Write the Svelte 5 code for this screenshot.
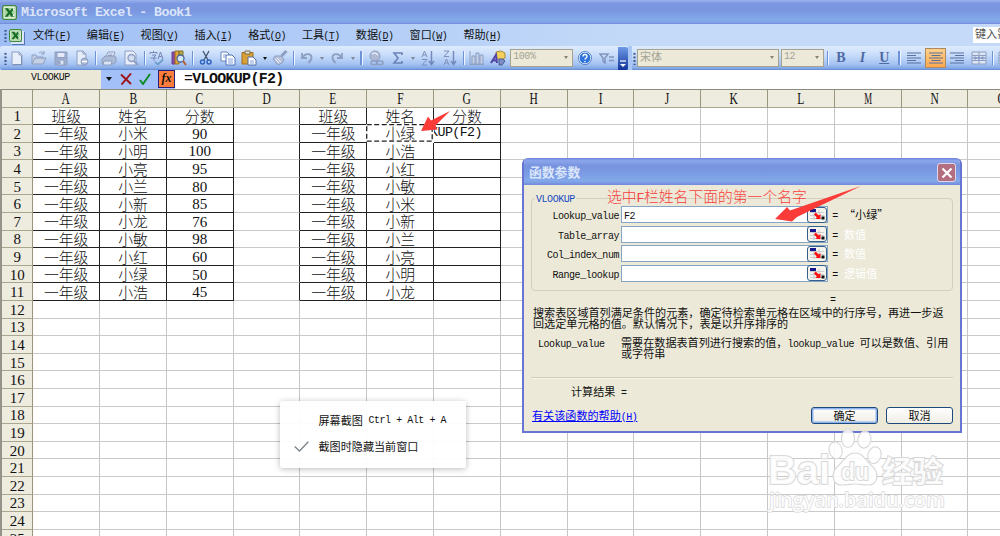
<script>
  const menus = [
    ['文件', 'F'], ['编辑', 'E'], ['视图', 'V'], ['插入', 'I'], ['格式', 'O'],
    ['工具', 'T'], ['数据', 'D'], ['窗口', 'W'], ['帮助', 'H'],
  ];
  const columns = 'ABCDEFGHIJKLMNO'.split('');
  const left = [
    ['小米', '90'], ['小明', '100'], ['小亮', '95'], ['小兰', '80'], ['小新', '85'],
    ['小龙', '76'], ['小敏', '98'], ['小红', '60'], ['小绿', '50'], ['小浩', '45'],
  ];
  const right = ['小绿', '小浩', '小红', '小敏', '小米', '小新', '小兰', '小亮', '小明', '小龙'];
  const rows = Array.from({ length: 25 }, (_, r) => {
    if (r === 0) return ['班级', '姓名', '分数', '', '班级', '姓名', '分数'];
    if (r > 10) return [];
    const [name, score] = left[r - 1];
    return ['一年级', name, score, '', '一年级', right[r - 1], r === 1 ? 'KUP(F2)' : ''];
  });
  const boxed = (r, c) => r < 11 && c < 7 && c !== 3;
  const runs = (s) => s.match(/[\x20-\x7e]+|[^\x20-\x7e]+/g) ?? [];
  const standard = [
    'new', 'open', 'save', 'perm', '|', 'print', 'preview', '|', 'spell', 'research', '|',
    'cut', 'copy', 'paste', 'v', 'brush', '|', 'undo', 'v', 'redo', 'v', '||', 'link', 'sum', 'v',
    'az', 'za', '|', 'chart', 'draw',
  ];
  const args = [
    ['Lookup_value', 'F2', '“小绿”', true],
    ['Table_array', '', '数值', false],
    ['Col_index_num', '', '数值', false],
    ['Range_lookup', '', '逻辑值', false],
  ];
</script>

{#snippet t(s)}{#each runs(s) as run}{#if run.charCodeAt(0) < 127}<span class="half">{run}</span>{:else}{run}{/if}{/each}{/snippet}

{#snippet book(size)}
  <svg width={size} height={size} viewBox="0 0 16 16">
    <rect x=".7" y=".7" width="14.6" height="14.6" rx="2" fill="#eaf6e4" stroke="#3f8a3c" stroke-width="1.4" />
    <rect x="2.5" y="3" width="11" height="10" fill="#a5d39b" />
    <path d="M3 3.500h3.500l2 2.800 2-2.800h2.700L10 8l3.200 4.500H10L8 9.700 6 12.500H3L6.500 8z" fill="#176b27" />
    <path d="M11 3.500h2v3zM11 12h2V9z" fill="#fff" />
  </svg>
{/snippet}

{#snippet glyph(k)}
  <svg width="16" height="16" viewBox="0 0 16 16" fill="none" stroke="#8d9ec2" stroke-width="1">
    {#if k === 'new'}
      <path d="M3 2h7l3 3v10H3z" fill="#e9effa" /><path d="M10 2v3h3" /><path d="M12.500 6v8.500H4" stroke="#7f91b8" />
    {:else if k === 'open'}
      <path d="M1 14V5h4l1 2h6v2M1 14l3-6h11l-3 6z" fill="#c6d0e5" /><path d="M8 3c2-2 4-1 5 1m0-3v3h-3" />
    {:else if k === 'save'}
      <path d="M2 2h12v13H2z" fill="#9fafd0" /><path d="M4 2.500h8v5H4z" fill="#e4ebf7" /><path d="M5 10h6v5H5z" fill="#dbe3f3" /><path d="M6.500 11v3" stroke-width="2" />
    {:else if k === 'perm'}
      <path d="M3 1h6l3 3v11H3z" fill="#e6ecf8" /><path d="M9 1v3h3" /><circle cx="10.500" cy="11.500" r="3.500" fill="#a9b7d4" /><path d="M8 11.500h5" stroke="#fff" stroke-width="1.500" />
    {:else if k === 'print'}
      <path d="M5 7l2-5h7l-2 5" fill="#edf2fb" /><path d="M1 9l3-3h10l1 2v4l-3 2H1z" fill="#aebbd6" /><path d="M3 11h8l-1 4H2z" fill="#dce4f3" /><path d="M7.500 4h4M7 5.500h4" />
    {:else if k === 'preview'}
      <path d="M2 1h8l3 3v11H2z" fill="#e9effa" /><circle cx="8.500" cy="8" r="3.500" fill="#d3def0" stroke-width="1.400" /><path d="M11 11l4 4" stroke-width="2" />
    {:else if k === 'spell'}
      <path d="M1 4V2.500h7V4M4.500 1v1.500M3 5h4L5 7v4M1.500 8h6M9 9l2.500-7L14 9M10 6.500h3" stroke="#7888ba" /><path d="M6 12l3 2.500 5-5" stroke="#6e9fca" stroke-width="1.800" />
    {:else if k === 'research'}
      <path d="M1 2h3v12H1z" fill="#8c4aa4" stroke="#6b3f94" /><path d="M4 1h4v13H4z" fill="#e0a83c" stroke="#9a6a24" /><path d="M8 1h4v9H8z" fill="#b9a646" stroke="#80722b" /><circle cx="9.500" cy="8.500" r="3.500" fill="#d4e6fa" stroke="#4b6695" stroke-width="1.300" /><path d="M12 11l3 4" stroke="#b55f31" stroke-width="2" />
    {:else if k === 'cut'}
      <path d="M5 1l5 9M11 1L6 10" stroke="#41546f" stroke-width="1.300" /><circle cx="4.500" cy="12" r="2" stroke="#2f66bf" stroke-width="1.500" /><circle cx="11" cy="12" r="2" stroke="#2f66bf" stroke-width="1.500" />
    {:else if k === 'copy'}
      <path d="M1 2h6l2 2v7H1z" fill="#fff" stroke="#6684bd" /><path d="M6 5h6l3 3v7H6z" fill="#fff" stroke="#4f72b6" /><path d="M8 9h5M8 11h5M8 13h5M3 5h3M3 7h3" stroke="#7fa2dc" />
    {:else if k === 'paste'}
      <path d="M1 2.500h11V14H1z" fill="#d9a036" stroke="#a06f20" /><path d="M4 1h5v3H4z" fill="#e9e4d0" stroke="#7b6c4c" /><path d="M7 7h5l3 3v5H7z" fill="#fff" stroke="#506fa8" /><path d="M9 11h4M9 13h4" stroke="#7fa2dc" />
    {:else if k === 'brush'}
      <path d="M14.500 1l-5 5" stroke-width="3" /><path d="M3 6l6 0 3 3-2 4-4 2-5-6z" fill="#b5c1da" /><path d="M3 9l4 4M5 8l4 4" stroke="#edf2fa" />
    {:else if k === 'undo'}
      <path d="M3 3v5h5M3.500 7.500C6 3 12 3 12.500 7c.2 2-1 4-3 6" stroke-width="1.800" />
    {:else if k === 'redo'}
      <path d="M13 3v5H8M12.500 7.500C10 3 4 3 3.500 7c-.2 2 1 4 3 6" stroke-width="1.800" />
    {:else if k === 'link'}
      <circle cx="7" cy="6" r="5" fill="#aebad5" /><path d="M4 4c2-2 4-1 6 1" stroke="#e2e9f5" stroke-width="1.500" /><rect x="3" y="11" width="6.500" height="3.500" rx="1.700" stroke-width="1.600" /><rect x="8.500" y="11" width="6.500" height="3.500" rx="1.700" stroke-width="1.600" />
    {:else if k === 'sum'}
      <path d="M12 5V3H4l4 5-4 5h8v-2" stroke="#6b83b7" stroke-width="1.600" />
    {:else if k === 'az' || k === 'za'}
      <path d={k === 'az' ? 'M2 7l2.500-6L7 7M3 5h3M2 9.500h5l-5 5.500h5' : 'M2 1h5L2 6.500h5M2 15l2.500-6L7 15M3 13h3'} stroke="#7f91b9" /><path d="M11.500 1v13M9 11l2.500 3.500L14 11" stroke="#7288bb" stroke-width="1.400" />
    {:else if k === 'chart'}
      <path d="M1 1v13.500h14" /><path d="M3 6h3v8H3zM7 3h3v11H7zM11 5h3v9h-3z" fill="#c7d1e6" />
    {:else if k === 'draw'}
      <path d="M6 2l5-1 4 2v5l-4 2-5-2z" fill="#f2cf5c" stroke="#a98b38" /><path d="M1 13L6 5l1 8M3 10.500h4" stroke="#5246a8" stroke-width="2" /><path d="M9 9h4l2 2-3 4H9z" fill="#7c8fc4" stroke="#4b5a94" />
    {:else if k === 'merge'}
      <path d="M1 2h14v12H1zM1 5.500h14M1 10.500h14M8 2v3.500M8 10.500V14" fill="#dde5f3" /><path d="M1.500 8h4M14.500 8h-4M4 6.500L5.500 8 4 9.500M12 6.500L10.500 8l1.500 1.500" stroke="#5e78af" /><circle cx="8" cy="8" r="1.200" stroke="#5e78af" />
    {/if}
  </svg>
{/snippet}

{#snippet align(x1, x2)}
  <svg width="14" height="12" viewBox="0 0 14 12" stroke="#59719f" stroke-width="1.200">
    <path d={`M0 1h14M${x1} 3.500h${x2}M0 6h14M${x1} 8.500h${x2}M0 11h14`} />
  </svg>
{/snippet}

<div class="screen">
  <header class="title">{@render book(15)}<b>{@render t('Microsoft Excel - Book1')}</b></header>

  <nav class="menu">
    <i class="grip"></i>
    <span class="doc">{@render book(13)}</span>
    {#each menus as [name, key]}
      <span class="item">{name}<span class="half"> (<u>{key}</u>)</span></span>
    {/each}
    <span class="ask">键入需</span>
  </nav>

  <div class="tools">
    <div class="bar first">
      <i class="grip"></i>
      {#each standard as k, i}
        {#if k === '|' || k === '||'}<span class="sep" class:wide={k === '||'}></span>
        {:else if k === 'v'}<span class="drop" class:on={i === 14}></span>
        {:else}<span class="slot">{@render glyph(k)}</span>{/if}
      {/each}
      <span class="combo zoom">{@render t('100%')}<i></i></span>
      <span class="slot">
        <svg width="14" height="14" viewBox="0 0 14 14"><circle cx="7" cy="7" r="5.900" fill="#2f73dc" stroke="#e9f2ff" /><circle cx="7" cy="7" r="6.600" fill="none" stroke="#3767b8" stroke-width=".7" /><path d="M5 5.500c0-3 4.200-2.500 4 0C9 7 7 7 7 8.500M7 10v1.300" fill="none" stroke="#fff" stroke-width="1.400" /></svg>
      </span>
      <span class="slot">
        <svg width="15" height="12" viewBox="0 0 15 12" fill="none" stroke="#8395bb" stroke-width="1.500"><path d="M1 2h8L6 6v5L4 9V6zM10 5h5M10 8.500h5" /></svg>
      </span>
      <span class="end"><svg width="8" height="8" viewBox="0 0 8 8"><path d="M1 1h6" stroke="#fff" stroke-width="1.200" /><path d="M1 4h6L4 7z" fill="#fff" /></svg></span>
    </div>
    <div class="bar second">
      <i class="grip"></i>
      <span class="combo font">宋体<i></i></span>
      <span class="combo size">{@render t('12')}<i></i></span>
      <span class="sep"></span>
      <span class="slot letter"><b>B</b></span>
      <span class="slot letter"><em>I</em></span>
      <span class="slot letter"><u>U</u></span>
      <span class="sep wide"></span>
      <span class="slot">{@render align(0, 9)}</span>
      <span class="slot active">{@render align(2.5, 9)}</span>
      <span class="slot">{@render align(5, 9)}</span>
      <span class="slot">{@render glyph('merge')}</span>
      <span class="sep"></span>
      <span class="slot">{@render glyph('merge')}</span>
    </div>
  </div>

  <div class="formula">
    <span class="name">{@render t('VLOOKUP')}</span>
    <span class="acts">
      <span class="drop on"></span>
      <svg width="12" height="12" viewBox="0 0 12 12"><path d="M1 1.500l10 9.500M11 .5L1.500 11.500" stroke="#a01018" stroke-width="1.900" /></svg>
      <svg width="12" height="12" viewBox="0 0 12 12"><path d="M1 7l3 4L11 1" fill="none" stroke="#0c8a20" stroke-width="1.900" /></svg>
      <span class="fx">fx</span>
    </span>
    <span class="input">{@render t('=')}<b>{@render t('VLOOKUP(F2)')}</b></span>
  </div>

  <main class="sheet">
    <div class="row heads">
      <span class="corner"></span>
      {#each columns as c}<span class="cell"><span class="squeeze" class:w={c === 'M'}>{c}</span></span>{/each}
    </div>
    {#each rows as row, r}
      <div class="row">
        <span class="num">{r + 1}</span>
        {#each columns as _, c}
          <span class="cell" class:boxed={boxed(r, c)} class:edge={boxed(r, c + 1) && !boxed(r, c)} class:digits={c === 2 && r > 0} class:editing={r === 1 && c === 6} class:noright={r === 1 && c === 5}>
            {@render t(row[c] ?? '')}
            {#if r === 1 && c === 5}<svg class="ants" width="67" height="18" viewBox="0 0 67 18"><rect x=".7" y=".7" width="65.500" height="16.500" fill="none" stroke="#fff" stroke-width="1.500" /><rect x=".7" y=".7" width="65.500" height="16.500" fill="none" stroke="#222" stroke-width="1.300" stroke-dasharray="5 2.500" /></svg>{/if}
          </span>
        {/each}
      </div>
    {/each}
  </main>

  <svg class="arrow cellarrow" width="30" height="22" viewBox="0 0 30 22"><path d="M0 20L7 5.500l3 4L29 0 14.500 14.500l2 4z" fill="#fb3b38" /></svg>

  <div class="dialog">
    <div class="dtitle"><b>函数参数</b>
      <span class="close"><svg width="12" height="12" viewBox="0 0 12 12"><path d="M1.500 1.500l9 9M10.500 1.500l-9 9" stroke="#fff" stroke-width="2.200" /></svg></span>
    </div>
    <div class="body">
      <fieldset>
        <legend>{@render t('VLOOKUP')}</legend>
        {#each args as [label, value, result, known]}
          <div class="arg">
            <span class="label">{@render t(label)}</span>
            <span class="field"><span>{@render t(value)}</span>
              <span class="pick"><svg width="15" height="11" viewBox="0 0 15 11"><path d="M0 3.500h14M0 6.500h14M0 9.500h14M4 1v10M9 1v10" stroke="#b9bfc6" stroke-width=".7" /><rect x="0" y="0" width="6" height="3" fill="#16168c" /><path d="M10.500 10H5.500l1.300-1.500L4 5.500 5.800 3.500l2.900 3 1.800-1.500z" fill="#f11" /><rect x="11.500" y="7.500" width="3" height="3" fill="#111" /></svg></span>
            </span>
            <span class="eq">{@render t('=')}</span>
            <span class="result" class:known>{result}</span>
          </div>
        {/each}
      </fieldset>
      <div class="total">{@render t('=')}</div>
      <p>搜索表区域首列满足条件的元素，确定待检索单元格在区域中的行序号，再进一步返<br />回选定单元格的值。默认情况下，表是以升序排序的</p>
      <div class="help">
        <span class="hl">{@render t('Lookup_value')}</span>
        <span>{@render t('需要在数据表首列进行搜索的值，lookup_value 可以是数值、引用')}<br />或字符串</span>
      </div>
      <div class="calc">{@render t('计算结果 =')}</div>
      <div class="foot">
        <a href="#help">{@render t('有关该函数的帮助(H)')}</a>
        <span class="btn ok">确定</span>
        <span class="btn">取消</span>
      </div>
    </div>
  </div>

  <div class="note">{@render t('选中F栏姓名下面的第一个名字')}</div>
  <svg class="arrow bigarrow" width="88" height="36" viewBox="0 0 88 36"><path d="M0 33L12 21l3 3.500L86 0 22 31l-5 4.500z" fill="#fb3b38" /></svg>

  <div class="popup">
    <div><span></span>{@render t('屏幕截图 Ctrl + Alt + A')}</div>
    <div><span><svg width="15" height="11" viewBox="0 0 15 11"><path d="M.7 5.500l4.800 4.500L14.300.7" fill="none" stroke="#7b838a" stroke-width="1.300" /></svg></span>截图时隐藏当前窗口</div>
  </div>

  <svg class="mark" width="184" height="88" viewBox="0 0 184 88">
    <g fill="#fff" fill-opacity=".85" stroke="#d9d9d9" stroke-width="1.200">
      <ellipse cx="70.500" cy="22.500" rx="6.500" ry="8.500" transform="rotate(-15 70 22)" />
      <ellipse cx="83" cy="10.500" rx="6.500" ry="9" />
      <ellipse cx="99.500" cy="11.500" rx="6.500" ry="8.500" transform="rotate(12 99 11)" />
      <ellipse cx="109.500" cy="27" rx="6.500" ry="8.500" transform="rotate(18 109 27)" />
      <path d="M90 25c8 0 11 8 17 13 8 7 6 19-4 19-5 0-9-1-13-1s-8 1-13 1c-10 0-12-12-4-19 6-5 9-13 17-13z" />
      <g paint-order="stroke" stroke-width="2" font-family="Liberation Sans, sans-serif" font-weight="700">
        <text x="3" y="56" font-size="40" textLength="62" lengthAdjust="spacingAndGlyphs">Bai</text>
        <text x="76" y="52" font-size="24" textLength="28" lengthAdjust="spacingAndGlyphs">du</text>
        <text x="117" y="54" font-size="30" textLength="61" lengthAdjust="spacingAndGlyphs" font-family="Noto Sans CJK SC, sans-serif">经验</text>
        <text x="4" y="79" font-size="20" textLength="176" lengthAdjust="spacingAndGlyphs" font-weight="600" font-family="Open Sans, sans-serif" stroke-width="1.300">jingyan.baidu.com</text>
      </g>
    </g>
  </svg>
</div>

<style>
  :global(body) { overflow: hidden; }
  .screen {
    position: relative; width: 1000px; height: 536px; overflow: hidden; background: #fff;
    display: flex; flex-direction: column; color: #111; white-space: nowrap;
    font: 11.1px/1 "Noto Sans CJK SC", sans-serif;
  }
  .screen :global(*) { box-sizing: border-box; }
  svg { display: block; flex: none; }
  .half { font-family: "Liberation Mono", monospace; font-size: .9em; letter-spacing: -.0446em; white-space: pre; line-height: 0; }
  .title {
    flex: none; height: 24px; display: flex; align-items: center; gap: 4px; padding-left: 2px;
    background: linear-gradient(#9ab3ee, #7b97e0 15%, #7a96df 45%, #83a8ea 80%, #82a5e8 92%, #7288dc);
    color: #dbe5fb; font-size: 14.8px;
  }
  .title b { font-size: 14.800px; padding-bottom: 3px; }
  .menu {
    flex: none; height: 22px; display: flex; align-items: center; padding-left: 4px;
    background: linear-gradient(90deg, #9ebef5, #c4daf8 65%);
  }
  .grip { width: 3px; height: 13px; flex: none; background: radial-gradient(circle, #3a5287 1px, transparent 1.200px) 0 0 / 3px 3.600px; }
  .doc { width: 26px; padding-left: 2px; display: block; }
  .doc svg { box-shadow: 2px 2px 0 #dbe6fa, 3px 3px 0 #5575b5; }
  .item { width: 53.8px; flex: none; line-height: 14px; padding-bottom: 3px; }
  .item .half { letter-spacing: -.05em; margin-left: -1px; }
  .item u { text-underline-offset: 1px; }
  .ask { margin-left: auto; width: 27px; height: 16px; line-height: 13px; background: #fff; padding-left: 2px; overflow: hidden; color: #555; }
  .tools { flex: none; height: 24px; display: flex; gap: 4px; background: #a9c6f5; }
  .bar {
    display: flex; align-items: center; height: 24px; flex: none;
    background: linear-gradient(#dfebfd, #cadefa 35%, #a5c3f2 75%, #83a8e6 93%, #5f86cc);
  }
  .first { width: 628px; padding-left: 3.5px; border-radius: 3px 0 0 3px; }
  .second { width: 368px; padding-left: 1px; overflow: hidden; }
  .slot { width: 21.7px; height: 20px; flex: none; display: flex; align-items: center; justify-content: center; }
  .sep { width: 5px; height: 14px; flex: none; background: linear-gradient(90deg, transparent 40%, #6c93d6 40%, #6c93d6 60%, #eef5ff 60%, #eef5ff 80%, transparent 80%); }
  .sep.wide { width: 8px; }
  .drop { width: 9px; flex: none; display: flex; justify-content: center; }
  .drop::after { content: ""; border: 2.500px solid transparent; border-top: 3px solid #7c8694; border-bottom: 0; }
  .drop.on::after { border-top-color: #111; }
  .combo {
    height: 18px; flex: none; border: 1px solid #a5a28f; background: #ece9d8; color: #a4a294;
    display: flex; justify-content: space-between; align-items: center; padding: 0 4px 2px 2px; margin-right: 1px;
  }
  .combo i { border: 2.500px solid transparent; border-top: 3px solid #868374; border-bottom: 0; }
  .zoom { width: 63px; margin-left: 1px; }
  .font { width: 142px; margin-right: 2px; margin-left: 1px; }
  .size { width: 43px; margin-right: 1px; }
  .end { margin-left: auto; width: 11px; height: 23px; background: linear-gradient(#6f9ae6, #12349a); display: flex; align-items: end; justify-content: center; padding-bottom: 2px; border-radius: 0 2px 2px 0; }
  .letter { color: #4f69a4; font: 700 14px/14px "Liberation Serif", serif; }
  .active { background: linear-gradient(#ffd08a, #ffa94f); border: 1px solid #b08a5c; }
  .formula { flex: none; height: 18.5px; display: flex; background: #fff; }
  .name { width: 101px; background: #ebe8d8; text-align: center; line-height: 10px; }
  .acts { width: 74px; display: flex; align-items: center; gap: 7px; padding-left: 3px; background: #a3c1f8; }
  .acts .drop::after { border-width: 4px 3.500px 0; }
  .fx { width: 18px; height: 18px; margin-left: auto; background: #ff7d3c; border: 1px solid #26217c; text-align: center; font: italic 700 12px/15px "Liberation Serif", serif; }
  .input { padding-left: 9px; font-size: 16.6px; line-height: 13px; }
  .sheet { flex: 1; min-height: 0; border-left: 2px solid #96948a; overflow: hidden; }
  .row { display: flex; height: 17.6px; }
  .heads { height: 19px; border-top: 1.500px solid #8c8b80; }
  .heads .cell, .corner, .num { background: #eeebdf; border-right: 1px solid #99967d; border-bottom: 1px solid #a9a68f; }
  .corner, .num { width: 31.3px; flex: none; }
  .num { display: flex; align-items: center; justify-content: center; font: 15px/15px "Liberation Serif", serif; padding-top: 2px; }
  .cell {
    width: 66.8px; flex: none; display: flex; align-items: center; justify-content: center; position: relative;
    border-right: 1px solid #c6c6c6; border-bottom: 1px solid #c9c9c9; font-size: 14.8px; line-height: 15px; padding-bottom: 1px; font-weight: 300;
  }
  .boxed { border-color: #222; }
  .edge { border-right-color: #222; }
  .noright { border-color: transparent; }
  .digits .half { font-family: "Liberation Serif", serif; font-size: 15px; letter-spacing: 0; }
  .digits { font-weight: 400; padding: 1px 0 0; }
  .editing { font-weight: 400; justify-content: end; overflow: hidden; padding: 0 18px 0 0; }
  .heads .cell { font: 16px/16px "Liberation Serif", serif; padding: 2px 0 0; }
  .squeeze { transform: scaleX(.72); }
  .squeeze.w { transform: scaleX(.55); }
  .ants { position: absolute; left: -1px; top: -1px; }
  .arrow { position: absolute; }
  .cellarrow { left: 421px; top: 111px; }
  .bigarrow { left: 775px; top: 186px; }
  .dialog {
    position: absolute; left: 522px; top: 158px; width: 440px; height: 275px; background: #ece9d8;
    border: 2px solid #6675d2; border-top: 0; border-radius: 6px 6px 0 0; overflow: hidden; display: flex; flex-direction: column;
  }
  .dtitle {
    height: 27px; flex: none; display: flex; justify-content: space-between; align-items: center; padding: 2px 4px 0 5px;
    background: linear-gradient(#6b83dc, #8ba6eb 10%, #7793de 30%, #7b9ce4 60%, #83a9ea 85%, #7189dc);
    color: #dce6fb; font-size: 12.8px;
  }
  .close { width: 19px; height: 19px; border: 1px solid #dfd6ea; border-radius: 3px; background: #b36f80; display: flex; align-items: center; justify-content: center; }
  .body { flex: 1; padding: 7px 7px 0; display: flex; flex-direction: column; }
  fieldset { margin: 0; border: 1px solid #d2cfbd; border-radius: 4px; height: 99px; padding: 1px 0 0 5px; min-width: 0; }
  legend { color: #1749c4; padding: 0 1px; margin-left: -2px; line-height: 10px; height: 12px; }
  .arg { display: flex; align-items: center; height: 19.5px; }
  .label { width: 82px; text-align: right; }
  .field { width: 207px; height: 17px; margin-left: 2px; border: 1px solid #86a5c4; background: #fff; display: flex; align-items: center; justify-content: space-between; padding-left: 2px; }
  .pick { width: 20px; height: 16px; border: 1.500px solid #315f8e; border-radius: 3px; background: #f4f3ec; display: flex; align-items: center; justify-content: center; }
  .eq { width: 12px; text-align: center; margin: 0 3px 0 1px; }
  .result { color: #fff; }
  .result.known { color: #111; }
  .total { height: 16px; line-height: 14px; padding: 0 0 0 299px; }
  p { margin: 0; padding: 0 0 0 2px; line-height: 11.3px; height: 22.6px; }
  .help { display: flex; padding: 7px 0 0 7px; line-height: 11px; height: 45px; }
  .hl { width: 83px; }
  .calc { border-top: 1px solid #cfccbb; box-shadow: inset 0 1px #f8f6ec; padding: 7px 0 0 40px; height: 27px; line-height: 12px; margin: 2px 0 0; }
  .foot { display: flex; align-items: center; height: 20px; gap: 8px; margin-top: 2px; }
  .foot a { color: #00f; margin-right: auto; padding-left: 1px; line-height: 14px; margin-top: -2px; }
  .btn { width: 67px; height: 17px; border: 1px solid #1d4a7c; border-radius: 3px; background: linear-gradient(#fff, #efede4); text-align: center; line-height: 14px; }
  .ok { box-shadow: inset 0 0 0 1.500px #8eb3ee; }
  .note { position: absolute; left: 607px; top: 188px; color: #f8403c; font-size: 14.8px; line-height: 16px; font-weight: 300; }
  .popup {
    position: absolute; left: 280px; top: 401px; width: 186px; height: 67px; background: rgba(255, 255, 255, .94);
    border-radius: 3px; box-shadow: 0 1px 6px #0004; padding: 6px 0 0 14px;
  }
  .popup div { display: flex; align-items: center; height: 26.500px; }
  .popup div .half { padding-top: 2px; }
  .popup div > span:first-child { width: 24.500px; }
  .mark { position: absolute; left: 765px; top: 428px; }
</style>
